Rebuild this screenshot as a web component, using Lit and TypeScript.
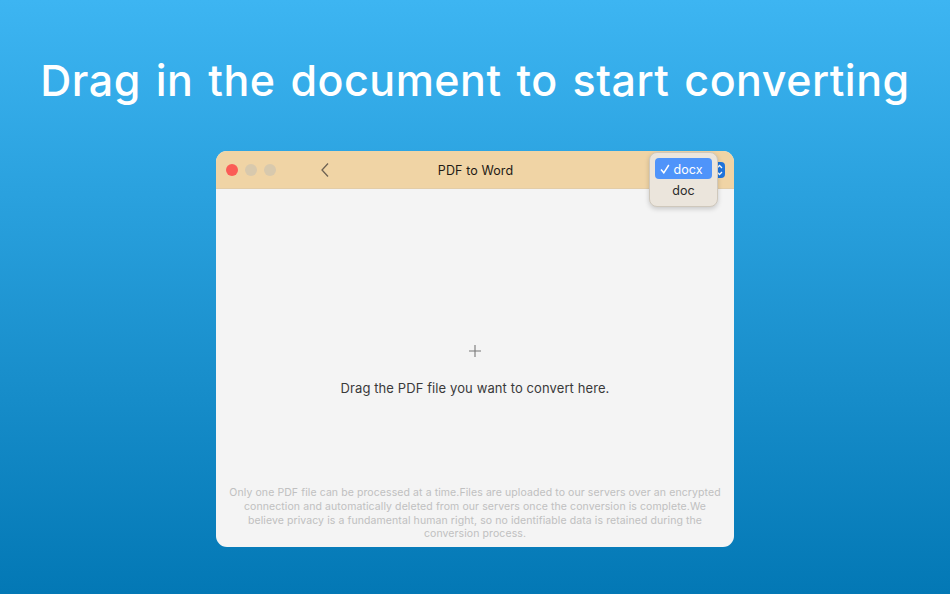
import { LitElement, html, css } from "lit";
import { customElement } from "lit/decorators.js";

@customElement("app-root")
export class AppRoot extends LitElement {
  static styles = css`
    :host {
      display: block;
      width: 950px;
      height: 594px;
      overflow: hidden;
      font-family: Inter, "Liberation Sans", sans-serif;
    }
    .page {
      width: 950px;
      height: 594px;
      box-sizing: border-box;
      background: linear-gradient(180deg, #3db5f2 0%, #0378b5 100%);
      display: flex;
      flex-direction: column;
      align-items: center;
      padding-top: 54px;
    }
    h1 {
      margin: 0;
      height: 52px;
      line-height: 52px;
      font-size: 43px;
      font-weight: 500;
      color: #fff;
      letter-spacing: 0.48px;
      word-spacing: 3px;
      white-space: nowrap;
    }
    .win {
      margin-top: 45px;
      width: 518px;
      height: 396px;
      border-radius: 11px;
      background: #f4f4f4;
      display: flex;
      flex-direction: column;
      position: relative;
      overflow: hidden;
    }
    .bar {
      height: 37px;
      flex: none;
      background: #f0d4a5;
      border-bottom: 1px solid #e3cda8;
      display: flex;
      align-items: center;
      padding-left: 10px;
      position: relative;
    }
    .light {
      width: 12px;
      height: 12px;
      border-radius: 50%;
      background: #d8c9ad;
      margin-right: 7px;
    }
    .light.red {
      background: #fb5c56;
    }
    .back {
      margin-left: 37px;
      display: block;
    }
    .title {
      position: absolute;
      left: 1px;
      right: 0;
      top: 1px;
      bottom: 0;
      display: flex;
      align-items: center;
      justify-content: center;
      font-size: 12.5px;
      font-weight: 400;
      color: #1f1b16;
      letter-spacing: 0.1px;
    }
    .stepper {
      position: absolute;
      right: 9px;
      top: 11px;
      width: 18px;
      height: 16px;
      border-radius: 4px;
      background: #1f74dc;
    }
    .stepper svg {
      position: absolute;
      right: 2px;
      top: 2px;
    }
    .menu {
      position: absolute;
      left: 433px;
      top: 1px;
      width: 69px;
      height: 55px;
      box-sizing: border-box;
      padding: 5px 5px;
      border-radius: 8px;
      background: #ebe5dc;
      border: 1px solid #cfc8bc;
      box-shadow: 0 2px 5px rgba(0, 0, 0, 0.18);
      font-size: 12.5px;
      color: #2a2a2a;
      display: flex;
      flex-direction: column;
    }
    .item {
      height: 21px;
      flex: none;
      display: flex;
      align-items: center;
      justify-content: center;
      border-radius: 4px;
      letter-spacing: 0.1px;
      padding-top: 1px;
      box-sizing: border-box;
    }
    .item.sel {
      background: #4f94fa;
      color: #fff;
      gap: 3px;
      padding-right: 4px;
    }
    .body {
      flex: 1;
      display: flex;
      flex-direction: column;
      align-items: center;
      padding: 155px 0 0;
      min-height: 0;
    }
    .plus {
      display: block;
    }
    .hint {
      margin-top: 21px;
      height: 18px;
      line-height: 18px;
      font-size: 13px;
      color: #3a3a3a;
      letter-spacing: 0.1px;
    }
    .note {
      margin-top: auto;
      margin-bottom: 6px;
      width: 500px;
      text-align: center;
      font-size: 10.5px;
      line-height: 13.7px;
      color: #c0c0c0;
      letter-spacing: 0.09px;
    }
  `;

  render() {
    return html`
      <div class="page">
        <h1>Drag in the document to start converting</h1>
        <div class="win">
          <div class="bar">
            <span class="light red"></span>
            <span class="light"></span>
            <span class="light"></span>
            <svg class="back" width="10" height="16" viewBox="0 0 10 16" fill="none" stroke="#6e6253" stroke-width="1.3">
              <path d="M8 1.5 L2 8 L8 14.5" />
            </svg>
            <div class="title">PDF to Word</div>
            <div class="stepper">
              <svg width="7" height="12" viewBox="0 0 7 12" fill="none" stroke="#fff" stroke-width="1.3">
                <path d="M1 4 L3.5 1.5 L6 4 M1 8 L3.5 10.5 L6 8" />
              </svg>
            </div>
          </div>
          <div class="body">
            <svg class="plus" width="14" height="14" viewBox="0 0 14 14" stroke="#777" stroke-width="1.1">
              <path d="M7 1 V13 M1 7 H13" />
            </svg>
            <div class="hint">Drag the PDF file you want to convert here.</div>
            <div class="note">
              Only one PDF file can be processed at a time.Files are uploaded to our servers over an encrypted
              connection and automatically deleted from our servers once the conversion is complete.We
              believe privacy is a fundamental human right, so no identifiable data is retained during the
              conversion process.
            </div>
          </div>
          <div class="menu">
            <div class="item sel">
              <svg width="10" height="10" viewBox="0 0 10 10" fill="none" stroke="#fff" stroke-width="1.5">
                <path d="M1 5.5 L3.8 8.8 L8.8 1" />
              </svg>
              <span>docx</span>
            </div>
            <div class="item">doc</div>
          </div>
        </div>
      </div>
    `;
  }
}
